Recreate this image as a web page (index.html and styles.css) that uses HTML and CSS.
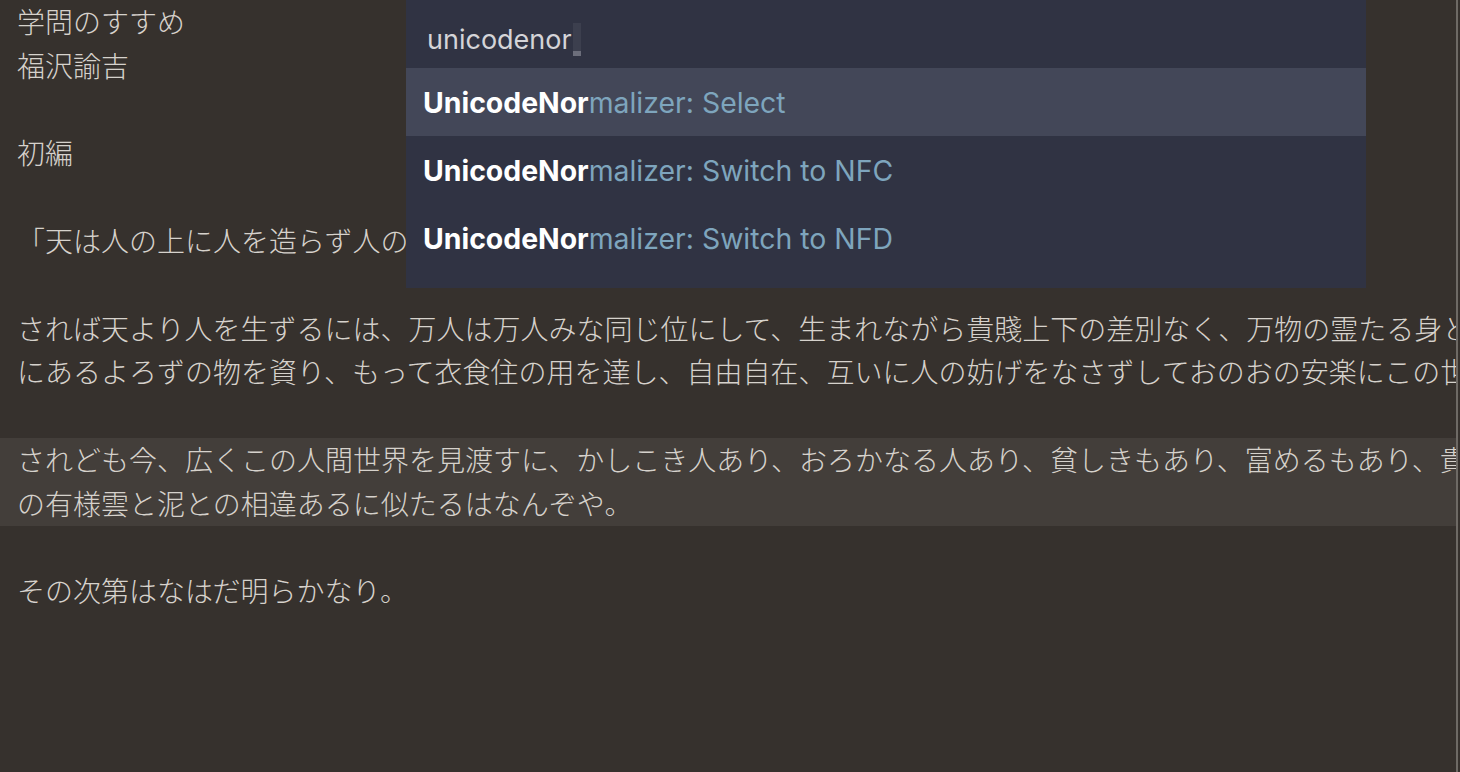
FILE: index.html
```html
<!DOCTYPE html>
<html lang="ja">
<head>
<meta charset="utf-8">
<link rel="stylesheet" href="styles.css">
</head>
<body>
<div class="editor">
  <div class="text">
    <div class="line">学問のすすめ</div>
    <div class="line">福沢諭吉</div>
    <div class="line"></div>
    <div class="line">初編</div>
    <div class="line"></div>
    <div class="line">「天は人の上に人を造らず人の</div>
    <div class="line"></div>
    <div class="line">されば天より人を生ずるには、万人は万人みな同じ位にして、生まれながら貴賤上下の差別なく、万物の霊たる身と心との働きをもって天地の間</div>
    <div class="line">にあるよろずの物を資り、もって衣食住の用を達し、自由自在、互いに人の妨げをなさずしておのおの安楽にこの世を渡らしめ給うの趣意なり。</div>
    <div class="line"></div>
    <div class="para current">
      <div class="line">されども今、広くこの人間世界を見渡すに、かしこき人あり、おろかなる人あり、貧しきもあり、富めるもあり、貴人もあり、下人もありて、そ</div>
      <div class="line">の有様雲と泥との相違あるに似たるはなんぞや。</div>
    </div>
    <div class="line"></div>
    <div class="line">その次第はなはだ明らかなり。</div>
  </div>
  <div class="guide"></div>
</div>
<div class="palette">
  <div class="query"><span class="qtext">unicodenor</span><span class="cursor"></span></div>
  <div class="item selected"><b>UnicodeNor</b><span class="rest">malizer: Select</span></div>
  <div class="item"><b>UnicodeNor</b><span class="rest">malizer: Switch to NFC</span></div>
  <div class="item"><b>UnicodeNor</b><span class="rest">malizer: Switch to NFD</span></div>
</div>
</body>
</html>
```
FILE: styles.css
```css
html, body {
  margin: 0;
  padding: 0;
  width: 1460px;
  height: 772px;
  overflow: hidden;
  background: #36312d;
}
.editor {
  position: relative;
  display: flex;
  width: 1460px;
  height: 772px;
}
.text {
  flex: 1;
  overflow: hidden;
  font-family: "Noto Sans CJK JP", "Noto Sans", sans-serif;
  font-weight: 300;
  font-size: 28px;
  line-height: 43.8px;
  color: #d6d2cc;
  white-space: nowrap;
}
.line {
  height: 43.8px;
  padding-left: 17px;
}
.current {
  background: #433e3a;
}
.guide {
  width: 2px;
  margin-right: 2px;
  background: #6e6a65;
  flex: none;
}
.palette {
  position: absolute;
  left: 406px;
  top: 0;
  width: 960px;
  height: 288px;
  background: #303343;
  font-family: Inter, "Liberation Sans", sans-serif;
  box-sizing: border-box;
  padding-bottom: 16px;
}
.query {
  height: 68px;
  box-sizing: border-box;
  padding-top: 10px;
  display: flex;
  align-items: center;
  padding-left: 21px;
  font-size: 27px;
  color: #d4d4d8;
}
.cursor {
  display: inline-block;
  width: 8px;
  height: 33px;
  margin-left: 1px;
  background: linear-gradient(#3c3f4e 0 28px, #6c6e7b 28px);
}
.item {
  height: 68px;
  display: flex;
  align-items: center;
  padding-left: 17px;
  font-size: 28.4px;
}
.item b {
  font-weight: 700;
  color: #ffffff;
}
.item .rest {
  color: #7ea5bd;
}
.selected {
  background: #434758;
}
```
